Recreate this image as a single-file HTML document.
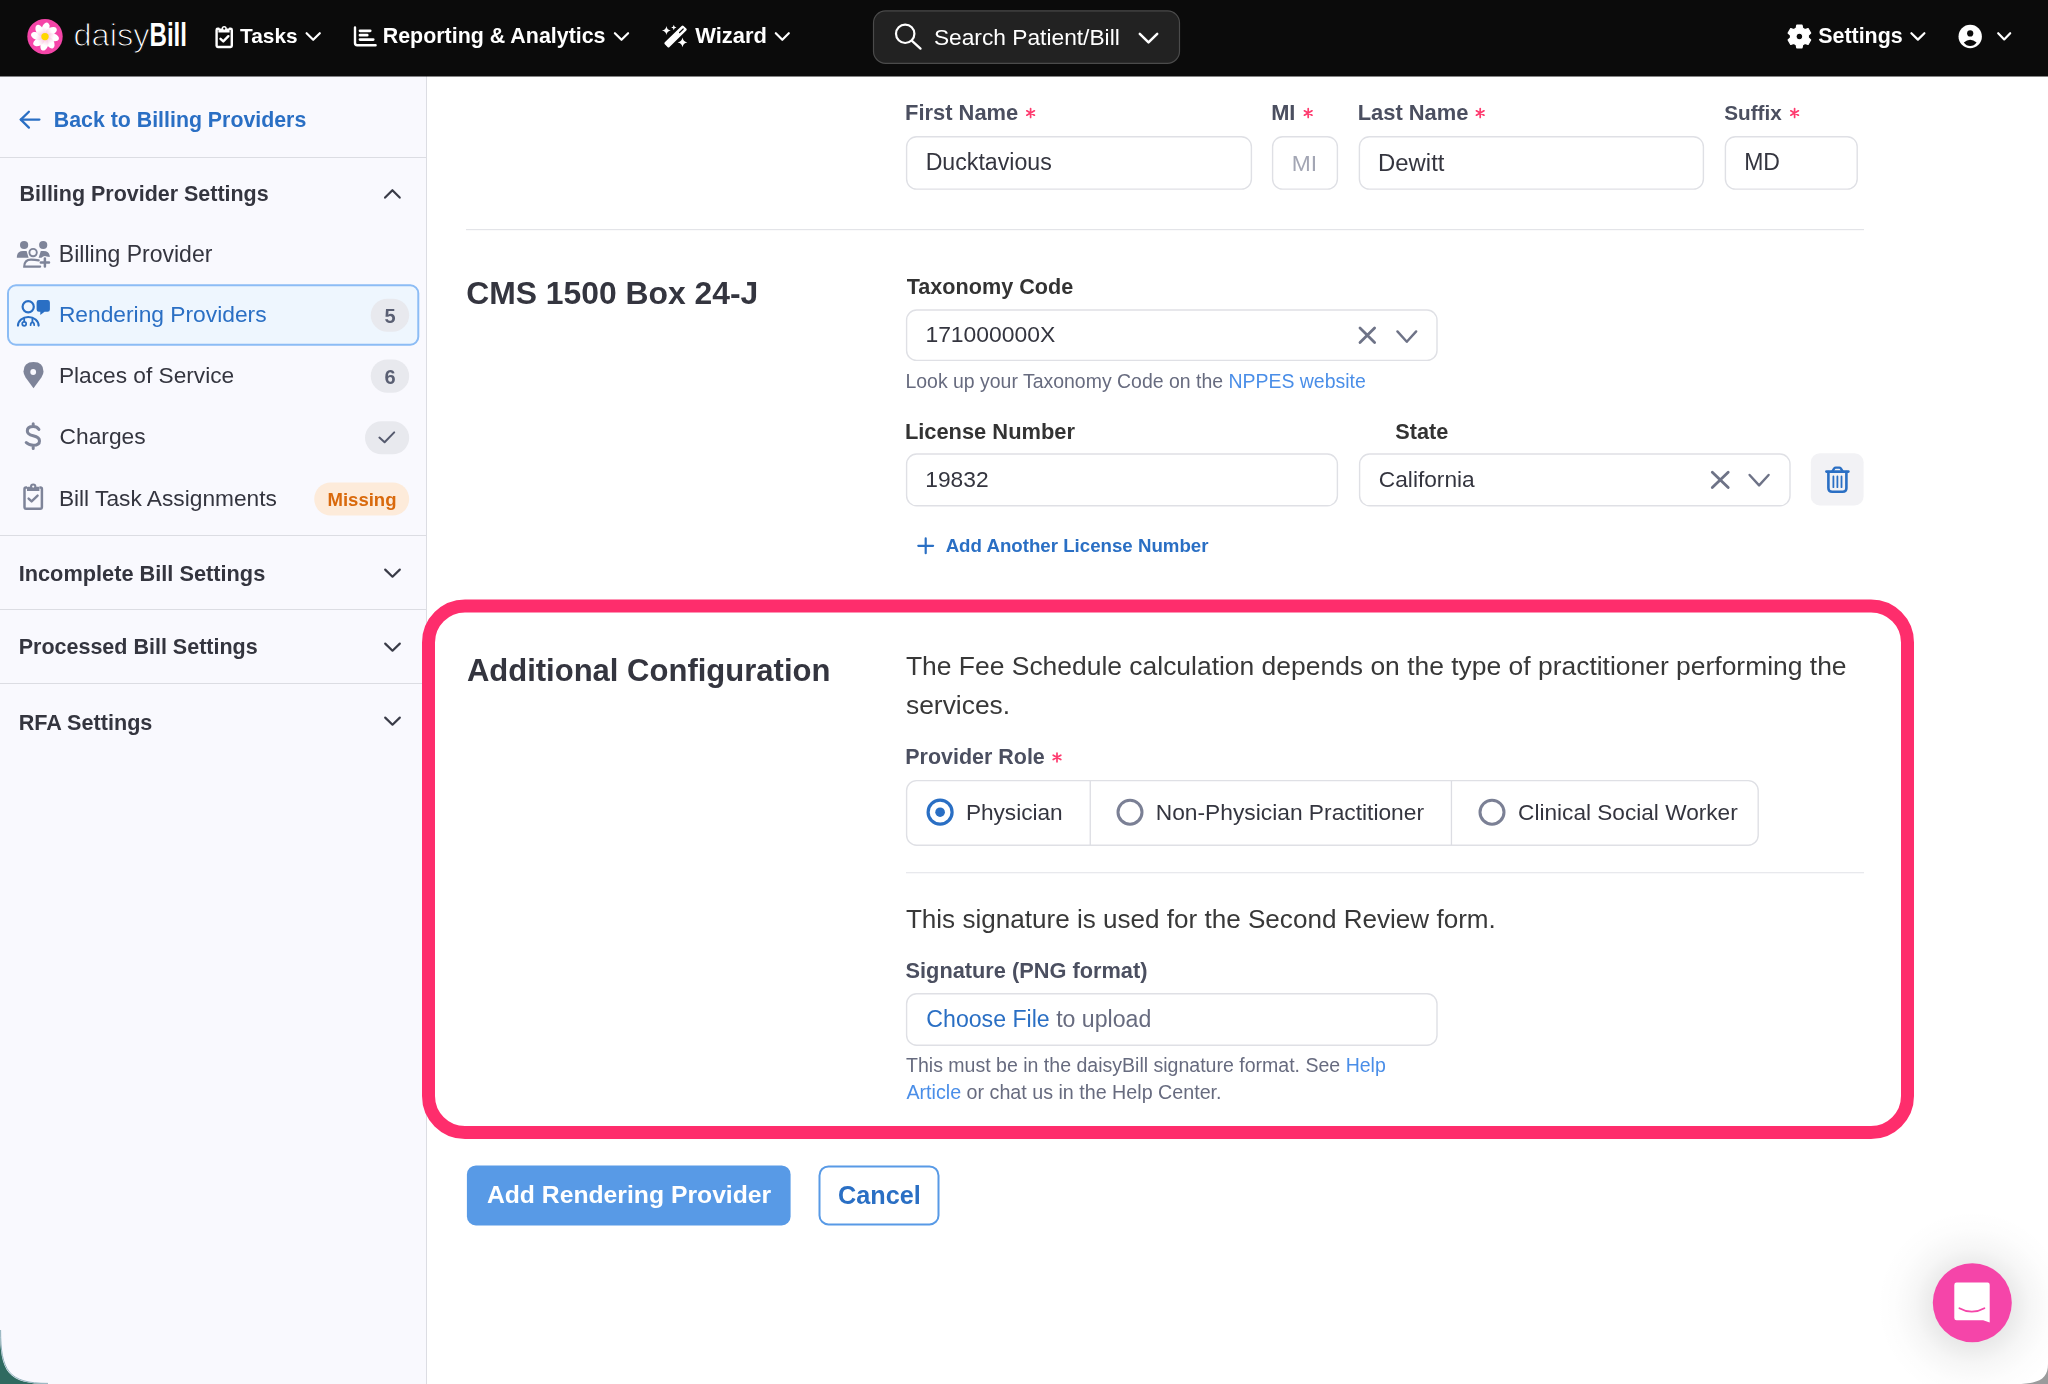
<!DOCTYPE html>
<html><head><meta charset="utf-8"><title>daisyBill</title>
<style>
html,body{margin:0;padding:0;}
body{width:2048px;height:1384px;overflow:hidden;background:#fff;font-family:"Liberation Sans",sans-serif;}
#page{position:relative;width:2048px;height:1384px;overflow:hidden;}
#txt{position:absolute;left:0;top:0;width:2048px;height:1384px;will-change:transform;}
#shapes{position:absolute;left:0;top:0;}
.t{position:absolute;white-space:nowrap;line-height:1;font-family:"Liberation Sans",sans-serif;}

</style></head><body>
<div id="page">
<svg id="shapes" width="2048" height="1384" viewBox="0 0 2048 1384">
<!-- backgrounds -->
<rect x="0" y="0" width="2048" height="1384" fill="#ffffff"/>
<rect x="0" y="76" width="426" height="1308" fill="#f9f9fe"/>
<rect x="426" y="76" width="1" height="1308" fill="#dcdde3"/>
<rect x="0" y="0" width="2048" height="76.5" fill="#0b0b0b"/>
<!-- sidebar dividers -->
<rect x="0" y="157" width="426" height="1" fill="#dcdde3"/>
<rect x="0" y="535" width="426" height="1" fill="#dcdde3"/>
<rect x="0" y="609" width="426" height="1" fill="#dcdde3"/>
<rect x="0" y="683" width="426" height="1" fill="#dcdde3"/>
<!-- logo -->
<defs><linearGradient id="petg" x1="0" y1="1" x2="0" y2="0"><stop offset="0" stop-color="#fbc8e2"/><stop offset="0.55" stop-color="#ffffff"/></linearGradient></defs>
<circle cx="45" cy="36.6" r="17.7" fill="#f545a8"/>
<g transform="translate(45 36.6)">
  <g id="pet"><ellipse cx="0.6" cy="-8.3" rx="3.7" ry="5.9" transform="rotate(20 0.6 -8.3)" fill="url(#petg)"/></g>
  <use href="#pet" transform="rotate(45)"/>
  <use href="#pet" transform="rotate(90)"/>
  <use href="#pet" transform="rotate(135)"/>
  <use href="#pet" transform="rotate(180)"/>
  <use href="#pet" transform="rotate(225)"/>
  <use href="#pet" transform="rotate(270)"/>
  <use href="#pet" transform="rotate(315)"/>
  <circle cx="0" cy="0" r="3.7" fill="#ffd700"/>
</g>
<text x="73.5" y="46" font-family="Liberation Sans" font-size="32" fill="#fff" stroke="#0b0b0b" stroke-width="1.1" textLength="76" lengthAdjust="spacingAndGlyphs">daisy</text>
<text x="149.5" y="46" font-family="Liberation Sans" font-weight="700" font-size="32.5" fill="#fff" textLength="37.5" lengthAdjust="spacingAndGlyphs">Bill</text>
<!-- nav icons -->
<g fill="none" stroke="#fff" stroke-width="2.4" stroke-linecap="round" stroke-linejoin="round">
  <!-- tasks clipboard -->
  <path d="M218.6 28.8 H217.8 Q216.6 28.8 216.6 30 V45.8 Q216.6 47 217.8 47 H230.6 Q231.8 47 231.8 45.8 V30 Q231.8 28.8 230.6 28.8 H229.8"/>
  <path d="M220.5 38.8 L223.3 41.4 L228.4 36.2"/>
  <!-- reporting -->
  <path d="M355 27.5 V43 Q355 45.2 357.2 45.2 H375.6"/>
  <path d="M360 30.8 H370.2 M360 35.2 H367.2 M360 39.6 H373.2" stroke-width="2.8"/>
  <!-- chevrons -->
  <path d="M306.6 33.2 L313.2 39.8 L319.8 33.2" stroke-width="2.2"/>
  <path d="M614.9 33.2 L621.5 39.8 L628.1 33.2" stroke-width="2.2"/>
  <path d="M775.8 33.2 L782.3 39.8 L788.8 33.2" stroke-width="2.2"/>
  <path d="M1911.4 33.2 L1917.9 39.6 L1924.4 33.2" stroke-width="2.2"/>
  <path d="M1998.2 33.2 L2004.2 39.4 L2010.2 33.2" stroke-width="2.2"/>
</g>
<path d="M218.4 32.6 H229.6 V29.4 Q229.6 28.6 228.8 28.6 H226.8 A2.6 2.6 0 0 0 221.6 28.6 H219.2 Q218.4 28.6 218.4 29.4 Z" fill="#fff"/>
<circle cx="224.2" cy="28.6" r="1.1" fill="#0b0b0b"/>
<!-- wizard -->
<g fill="#fff">
  <path d="M667.5 47 L664.8 44.3 Q663.8 43.3 664.8 42.3 L681.6 25.9 Q682.6 24.9 683.6 25.9 L686.3 28.6 Q687.3 29.6 686.3 30.6 L669.5 47 Q668.5 48 667.5 47 Z"/>
  <path d="M666.4 26 Q666.9 30 670.9 30.5 Q666.9 31 666.4 35 Q665.9 31 661.9 30.5 Q665.9 30 666.4 26 Z"/>
  <path d="M673.8 24.8 Q674.1 27.2 676.5 27.5 Q674.1 27.8 673.8 30.2 Q673.5 27.8 671.1 27.5 Q673.5 27.2 673.8 24.8 Z"/>
  <path d="M682.5 37.6 Q683.1 41.8 687.3 42.4 Q683.1 43 682.5 47.2 Q681.9 43 677.7 42.4 Q681.9 41.8 682.5 37.6 Z"/>
</g>
<path d="M679.6 32.5 L683.2 29" stroke="#0b0b0b" stroke-width="1.2" stroke-linecap="round"/>
<!-- search box -->
<rect x="873.5" y="10.9" width="306" height="52.4" rx="12" fill="#222222" stroke="#4b4b4b" stroke-width="1.2"/>
<circle cx="905.2" cy="33.8" r="9.2" fill="none" stroke="#fff" stroke-width="2.2"/>
<path d="M912 40.8 L920.5 48.6" stroke="#fff" stroke-width="2.3" stroke-linecap="round"/>
<path d="M1139.8 33.8 L1148.5 42.4 L1157.2 33.8" fill="none" stroke="#fff" stroke-width="2.5" stroke-linecap="round" stroke-linejoin="round"/>
<!-- settings gear -->
<g transform="translate(1799.4 36.5)">
  <path fill="#fff" fill-rule="evenodd" d="M-2.6 -11.4 H2.6 L3.3 -8.2 L5.6 -6.9 L8.7 -8 L11.3 -3.5 L8.9 -1.3 V1.3 L11.3 3.5 L8.7 8 L5.6 6.9 L3.3 8.2 L2.6 11.4 H-2.6 L-3.3 8.2 L-5.6 6.9 L-8.7 8 L-11.3 3.5 L-8.9 1.3 V-1.3 L-11.3 -3.5 L-8.7 -8 L-5.6 -6.9 L-3.3 -8.2 Z M0 -3.4 A3.4 3.4 0 1 0 0.01 -3.4 Z" stroke="#fff" stroke-width="1.2" stroke-linejoin="round"/>
</g>
<!-- user -->
<circle cx="1970.2" cy="36.5" r="11.7" fill="#fff"/>
<circle cx="1970.2" cy="33.4" r="3.1" fill="#0b0b0b"/>
<path d="M1963.8 42.4 Q1970.2 37.2 1976.6 42.4 Q1974 45.9 1970.2 45.9 Q1966.4 45.9 1963.8 42.4 Z" fill="#0b0b0b"/>

<!-- SIDEBAR icons -->
<path d="M20.8 119.6 H39.4" stroke="#2a6fc4" stroke-width="2.3" stroke-linecap="round"/>
<path d="M28.9 111.7 L20.8 119.6 L28.9 127.6" fill="none" stroke="#2a6fc4" stroke-width="2.3" stroke-linecap="round" stroke-linejoin="round"/>
<path d="M385.1 197.6 L392.4 190.2 L399.7 197.6" fill="none" stroke="#3a3c48" stroke-width="2.2" stroke-linecap="round" stroke-linejoin="round"/>
<path d="M385.2 569.6 L392.5 576.7 L399.8 569.6" fill="none" stroke="#3a3c48" stroke-width="2.2" stroke-linecap="round" stroke-linejoin="round"/>
<path d="M385.2 643.6 L392.5 650.7 L399.8 643.6" fill="none" stroke="#3a3c48" stroke-width="2.2" stroke-linecap="round" stroke-linejoin="round"/>
<path d="M385.2 717.6 L392.5 724.7 L399.8 717.6" fill="none" stroke="#3a3c48" stroke-width="2.2" stroke-linecap="round" stroke-linejoin="round"/>
<!-- billing provider icon -->
<g fill="#7e8499">
  <circle cx="24.1" cy="245" r="4.1"/>
  <circle cx="43.2" cy="245" r="4.1"/>
  <path d="M16.8 257.8 Q16.8 251 23 251 H26.6 L28.6 257.8 Z"/>
  <path d="M38.6 257.8 L40.8 251 H43.6 Q49.6 251 49.8 257 L46.6 256.4 Q44 255 41.4 257.8 Z"/>
</g>
<g fill="none" stroke="#7e8499" stroke-linecap="round">
  <circle cx="33.1" cy="252.6" r="3.7" stroke-width="1.9"/>
  <path d="M38.8 260.4 Q35 259.6 31 259.6 Q24.4 259.6 24.2 266.6 H40.2" stroke-width="2.1"/>
  <path d="M44.9 258.4 V266.6 M40.8 262.5 H49" stroke-width="2.5"/>
</g>
<!-- rendering providers box -->
<rect x="8" y="285.3" width="410.3" height="59.4" rx="8" fill="#eef6fe" stroke="#8cbcf5" stroke-width="2"/>
<g fill="none" stroke="#2a6fc4" stroke-width="2.2" stroke-linecap="round">
  <circle cx="28.2" cy="306.7" r="5.6"/>
  <path d="M18 325.6 A10.3 8.6 0 0 1 38.6 325.6"/>
  <path d="M24.2 318.4 V321.6 M32.4 318.4 V322.2" stroke-width="1.8"/>
  <circle cx="24.2" cy="323.8" r="2" stroke-width="1.7"/>
  <path d="M30.6 325.2 Q30.6 322.4 32.4 322.4 Q34.2 322.4 34.2 325.2" stroke-width="1.7"/>
</g>
<path d="M38.9 300.1 H47.6 Q49.9 300.1 49.9 302.4 V309.5 Q49.9 311.8 47.6 311.8 H44.6 L40.3 314.9 V311.8 H38.9 Q36.6 311.8 36.6 309.5 V302.4 Q36.6 300.1 38.9 300.1 Z" fill="#2a6fc4"/>
<!-- badges -->
<rect x="370.7" y="298.7" width="38.5" height="33" rx="16.5" fill="#e8e9ee"/>
<rect x="370.7" y="359.4" width="38.5" height="33.3" rx="16.6" fill="#e8e9ee"/>
<rect x="365" y="421.3" width="44.2" height="33" rx="16.5" fill="#e8e9ee"/>
<path d="M379.4 437.6 L384.6 442.2 L394.2 432.4" fill="none" stroke="#555a6e" stroke-width="2" stroke-linecap="round" stroke-linejoin="round"/>
<rect x="314.2" y="482.5" width="95" height="33" rx="16.5" fill="#fdebda"/>
<!-- pin -->
<path d="M33.5 388.2 L25.6 377.4 Q23.5 374.4 23.5 371.6 Q23.5 362 33.5 362 Q43.5 362 43.5 371.6 Q43.5 374.4 41.4 377.4 Z" fill="#7e8499"/>
<circle cx="33.2" cy="372" r="2.9" fill="#f9f9fe"/>
<!-- dollar -->
<path d="M38.9 429.4 Q37 426.6 33.2 426.6 Q27.3 426.6 27.3 431 Q27.3 434.4 33.2 435.8 Q39.5 437.2 39.5 440.9 Q39.5 445.2 33.2 445.2 Q28.6 445.2 26.2 442.6 M33.2 423.8 V426.6 M33.2 445.2 V448.6" fill="none" stroke="#7e8499" stroke-width="3" stroke-linecap="round" stroke-linejoin="round"/>
<!-- clipboard -->
<path d="M27 487.6 H26 Q24.5 487.6 24.5 489.1 V507.3 Q24.5 508.8 26 508.8 H40.4 Q41.9 508.8 41.9 507.3 V489.1 Q41.9 487.6 40.4 487.6 H39.4" fill="none" stroke="#7e8499" stroke-width="2.5" stroke-linejoin="round"/>
<path d="M27 491 H39.4 V487.6 Q39.4 486.8 38.6 486.8 H36.4 A3.2 3.2 0 0 0 30 486.8 H27.8 Q27 486.8 27 487.6 Z" fill="#7e8499"/>
<circle cx="33.2" cy="486.6" r="1.1" fill="#f9f9fe"/>
<path d="M28.6 498.6 L31.6 501.4 L37.6 495.6" fill="none" stroke="#7e8499" stroke-width="2.4" stroke-linecap="round" stroke-linejoin="round"/>

<!-- MAIN inputs -->
<g fill="#ffffff" stroke="#dfe0e5" stroke-width="1.4">
  <rect x="906.6" y="136.7" width="344.8" height="52.4" rx="10"/>
  <rect x="1272.6" y="136.7" width="64.8" height="52.4" rx="10"/>
  <rect x="1359.4" y="136.7" width="344" height="52.4" rx="10"/>
  <rect x="1725.4" y="136.7" width="131.8" height="52.4" rx="10"/>
  <rect x="906.6" y="310" width="530.4" height="50.4" rx="10"/>
  <rect x="906.6" y="454" width="430.8" height="51.8" rx="10"/>
  <rect x="1359.6" y="454" width="430.4" height="51.8" rx="10"/>
  <rect x="906.6" y="780.6" width="851.6" height="64.6" rx="10"/>
  <rect x="906.6" y="993.8" width="530.4" height="51.4" rx="10"/>
</g>
<rect x="466" y="229" width="1398" height="1.2" fill="#e3e4e8"/>
<!-- asterisks -->
<g stroke="#fe3a6e" stroke-width="1.7" stroke-linecap="round" fill="none">
  <path id="ast" d="M1030.6 108.6 V117.4 M1026.8 110.8 L1034.4 115.2 M1026.8 115.2 L1034.4 110.8"/>
  <use href="#ast" transform="translate(277.6 0)"/>
  <use href="#ast" transform="translate(449.6 0)"/>
  <use href="#ast" transform="translate(764 0)"/>
  <use href="#ast" transform="translate(26.4 644.4)"/>
</g>
<!-- select icons -->
<g stroke="#6e7387" stroke-width="2.8" stroke-linecap="round" fill="none" stroke-linejoin="round">
  <path d="M1360 328 L1374.6 342.4 M1374.6 328 L1360 342.4"/>
  <path d="M1397.4 331.4 L1406.8 341.8 L1416.2 331.4" stroke-width="2.4"/>
  <path d="M1712.3 472.2 L1728.2 487.6 M1728.2 472.2 L1712.3 487.6"/>
  <path d="M1749.6 475 L1759.1 485.4 L1768.6 475" stroke-width="2.4"/>
</g>
<!-- trash button -->
<rect x="1810.8" y="453.3" width="52.8" height="52.2" rx="9" fill="#f2f2f5"/>
<g stroke="#2a6fc4" stroke-linecap="round" stroke-linejoin="round" fill="none">
  <path d="M1826.4 471.6 H1848.4" stroke-width="2.6"/>
  <path d="M1832.4 471.4 L1834.2 468.4 Q1834.8 467.6 1835.8 467.6 H1839.2 Q1840.2 467.6 1840.8 468.4 L1842.6 471.4" stroke-width="2.4"/>
  <path d="M1828.4 472 V488 Q1828.4 491.8 1832.2 491.8 H1842.6 Q1846.4 491.8 1846.4 488 V472" stroke-width="2.6"/>
  <path d="M1833.4 476.4 V487.2 M1837.4 476.4 V487.2 M1841.5 476.4 V487.2" stroke-width="1.8"/>
</g>
<!-- add plus -->
<path d="M925.7 538.4 V553.2 M918.3 545.8 H933.1" stroke="#2a6fc4" stroke-width="2.2" stroke-linecap="round"/>

<!-- pink box -->
<rect x="428.5" y="606" width="1479" height="526.5" rx="36.5" fill="none" stroke="#fe2d6c" stroke-width="13"/>
<!-- radio group dividers -->
<rect x="1089.6" y="781" width="1.3" height="64" fill="#dcdde3"/>
<rect x="1450.8" y="781" width="1.3" height="64" fill="#dcdde3"/>
<circle cx="940.1" cy="812.2" r="12" fill="none" stroke="#2a6fc4" stroke-width="3.2"/>
<circle cx="940.1" cy="812.2" r="4.8" fill="#2a6fc4"/>
<circle cx="1130" cy="812.2" r="12" fill="none" stroke="#7b8095" stroke-width="3"/>
<circle cx="1492" cy="812.2" r="12" fill="none" stroke="#7b8095" stroke-width="3"/>
<rect x="906" y="872" width="958" height="1.3" fill="#e8e9ed"/>

<!-- buttons -->
<rect x="466.9" y="1165.4" width="323.7" height="60" rx="9" fill="#589ae6"/>
<rect x="819.5" y="1166.4" width="119" height="58" rx="9" fill="#fff" stroke="#589ae6" stroke-width="2"/>

<!-- chat bubble -->
<defs>
  <radialGradient id="sh" cx="0.5" cy="0.5" r="0.5">
    <stop offset="0.40" stop-color="#000" stop-opacity="0.085"/>
    <stop offset="0.6" stop-color="#000" stop-opacity="0.035"/>
    <stop offset="0.8" stop-color="#000" stop-opacity="0.01"/>
    <stop offset="1" stop-color="#000" stop-opacity="0"/>
  </radialGradient>
</defs>
<circle cx="1972.3" cy="1306" r="96" fill="url(#sh)"/>
<circle cx="1972.3" cy="1302.8" r="39.5" fill="#f545a9"/>
<path d="M1956.6 1282.6 H1987.6 Q1989.7 1282.6 1989.7 1284.7 V1322.6 L1983.2 1320.2 H1956.6 Q1954.3 1320.2 1954.3 1318 V1284.9 Q1954.3 1282.6 1956.6 1282.6 Z" fill="#fff"/>
<path d="M1959.4 1308.2 Q1971.8 1315.2 1984.4 1308.2" fill="none" stroke="#f545a9" stroke-width="1.8" stroke-linecap="round"/>
<path d="M0 1330 C0 1372 8 1384 48 1384 H0 Z" fill="#2f6a60"/>
<path d="M0.6 1330 C0.6 1371 8.6 1383.4 48 1383.4" fill="none" stroke="#86a9b6" stroke-width="0.9"/>
<path d="M2048 1364 C2048 1378 2040 1384 2016 1384 H2048 Z" fill="#9a9b9c"/>
</svg>

<div id="txt">
<div class="t" style="left:240.09px;top:26.15px;font-size:20.847px;font-weight:700"><span style="color:#ffffff">Tasks</span></div>
<div class="t" style="left:382.72px;top:25.68px;font-size:21.411px;font-weight:700"><span style="color:#ffffff">Reporting &amp; Analytics</span></div>
<div class="t" style="left:695.30px;top:25.25px;font-size:21.913px;font-weight:700"><span style="color:#ffffff">Wizard</span></div>
<div class="t" style="left:933.89px;top:25.74px;font-size:22.755px;font-weight:400"><span style="color:#ffffff">Search Patient/Bill</span></div>
<div class="t" style="left:1818.17px;top:25.55px;font-size:21.447px;font-weight:700"><span style="color:#ffffff">Settings</span></div>
<div class="t" style="left:53.82px;top:110.33px;font-size:21.345px;font-weight:700"><span style="color:#2a6fc4">Back to Billing Providers</span></div>
<div class="t" style="left:19.51px;top:184.23px;font-size:21.465px;font-weight:700"><span style="color:#34353f">Billing Provider Settings</span></div>
<div class="t" style="left:58.86px;top:242.91px;font-size:23.022px;font-weight:400"><span style="color:#34353f">Billing Provider</span></div>
<div class="t" style="left:58.88px;top:303.00px;font-size:22.797px;font-weight:400"><span style="color:#2a6fc4">Rendering Providers</span></div>
<div class="t" style="left:58.88px;top:364.18px;font-size:22.709px;font-weight:400"><span style="color:#34353f">Places of Service</span></div>
<div class="t" style="left:59.56px;top:424.61px;font-size:22.785px;font-weight:400"><span style="color:#34353f">Charges</span></div>
<div class="t" style="left:58.88px;top:487.47px;font-size:22.720px;font-weight:400"><span style="color:#34353f">Bill Task Assignments</span></div>
<div class="t" style="left:18.69px;top:563.28px;font-size:21.755px;font-weight:700"><span style="color:#34353f">Incomplete Bill Settings</span></div>
<div class="t" style="left:18.71px;top:637.24px;font-size:21.509px;font-weight:700"><span style="color:#34353f">Processed Bill Settings</span></div>
<div class="t" style="left:18.70px;top:711.89px;font-size:21.627px;font-weight:700"><span style="color:#34353f">RFA Settings</span></div>
<div class="t" style="left:384.40px;top:305.77px;font-size:20.000px;font-weight:700"><span style="color:#5a5f73">5</span></div>
<div class="t" style="left:384.40px;top:366.77px;font-size:20.000px;font-weight:700"><span style="color:#5a5f73">6</span></div>
<div class="t" style="left:327.49px;top:491.00px;font-size:18.546px;font-weight:700"><span style="color:#d9690c">Missing</span></div>
<div class="t" style="left:905.09px;top:102.16px;font-size:21.900px;font-weight:700"><span style="color:#4b4f60">First Name</span></div>
<div class="t" style="left:925.65px;top:151.18px;font-size:23.179px;font-weight:400"><span style="color:#34353f">Ducktavious</span></div>
<div class="t" style="left:1271.19px;top:102.25px;font-size:21.800px;font-weight:700"><span style="color:#4b4f60">MI</span></div>
<div class="t" style="left:1291.78px;top:151.50px;font-size:22.800px;font-weight:400"><span style="color:#a3a6b4">MI</span></div>
<div class="t" style="left:1357.68px;top:102.14px;font-size:21.925px;font-weight:700"><span style="color:#4b4f60">Last Name</span></div>
<div class="t" style="left:1378.09px;top:150.58px;font-size:23.885px;font-weight:400"><span style="color:#34353f">Dewitt</span></div>
<div class="t" style="left:1724.19px;top:103.17px;font-size:20.715px;font-weight:700"><span style="color:#4b4f60">Suffix</span></div>
<div class="t" style="left:1744.16px;top:151.31px;font-size:23.028px;font-weight:400"><span style="color:#34353f">MD</span></div>
<div class="t" style="left:466.13px;top:277.62px;font-size:31.871px;font-weight:700"><span style="color:#34353f">CMS 1500 Box 24-J</span></div>
<div class="t" style="left:906.78px;top:276.11px;font-size:21.608px;font-weight:700"><span style="color:#333333">Taxonomy Code</span></div>
<div class="t" style="left:925.40px;top:323.20px;font-size:22.917px;font-weight:400"><span style="color:#34353f">171000000X</span></div>
<div class="t" style="left:905.44px;top:372.12px;font-size:19.470px;font-weight:400"><span style="color:#676b7f">Look up your Taxonomy Code on the </span><span style="color:#4a8ee8">NPPES website</span></div>
<div class="t" style="left:904.89px;top:420.59px;font-size:21.865px;font-weight:700"><span style="color:#333333">License Number</span></div>
<div class="t" style="left:925.31px;top:467.52px;font-size:22.780px;font-weight:400"><span style="color:#34353f">19832</span></div>
<div class="t" style="left:1395.27px;top:420.52px;font-size:21.716px;font-weight:700"><span style="color:#333333">State</span></div>
<div class="t" style="left:1378.87px;top:467.59px;font-size:22.690px;font-weight:400"><span style="color:#34353f">California</span></div>
<div class="t" style="left:945.63px;top:536.78px;font-size:18.688px;font-weight:700"><span style="color:#2a6fc4">Add Another License Number</span></div>
<div class="t" style="left:466.88px;top:655.24px;font-size:31.024px;font-weight:700"><span style="color:#34353f">Additional Configuration</span></div>
<div class="t" style="left:905.97px;top:653.20px;font-size:26.457px;font-weight:400"><span style="color:#383838">The Fee Schedule calculation depends on the type of practitioner performing the</span></div>
<div class="t" style="left:905.97px;top:692.15px;font-size:26.400px;font-weight:400"><span style="color:#383838">services.</span></div>
<div class="t" style="left:905.31px;top:747.23px;font-size:21.463px;font-weight:700"><span style="color:#4b4f60">Provider Role</span></div>
<div class="t" style="left:965.89px;top:801.54px;font-size:22.637px;font-weight:400"><span style="color:#34353f">Physician</span></div>
<div class="t" style="left:1155.78px;top:801.41px;font-size:22.789px;font-weight:400"><span style="color:#34353f">Non-Physician Practitioner</span></div>
<div class="t" style="left:1518.07px;top:801.54px;font-size:22.637px;font-weight:400"><span style="color:#34353f">Clinical Social Worker</span></div>
<div class="t" style="left:905.88px;top:905.52px;font-size:26.082px;font-weight:400"><span style="color:#383838">This signature is used for the Second Review form.</span></div>
<div class="t" style="left:905.56px;top:959.87px;font-size:21.776px;font-weight:700"><span style="color:#4b4f60">Signature (PNG format)</span></div>
<div class="t" style="left:926.34px;top:1007.62px;font-size:23.134px;font-weight:400"><span style="color:#2a6fc4">Choose File</span><span style="color:#676b7f"> to upload</span></div>
<div class="t" style="left:906.01px;top:1055.76px;font-size:19.542px;font-weight:400"><span style="color:#676b7f">This must be in the daisyBill signature format. See </span><span style="color:#4a8ee8">Help</span></div>
<div class="t" style="left:906.40px;top:1082.63px;font-size:19.692px;font-weight:400"><span style="color:#4a8ee8">Article</span><span style="color:#676b7f"> or chat us in the Help Center.</span></div>
<div class="t" style="left:486.91px;top:1183.17px;font-size:24.720px;font-weight:700"><span style="color:#ffffff">Add Rendering Provider</span></div>
<div class="t" style="left:837.99px;top:1182.75px;font-size:25.225px;font-weight:700"><span style="color:#2a6fc4">Cancel</span></div>
</div>
</div>
</body></html>
